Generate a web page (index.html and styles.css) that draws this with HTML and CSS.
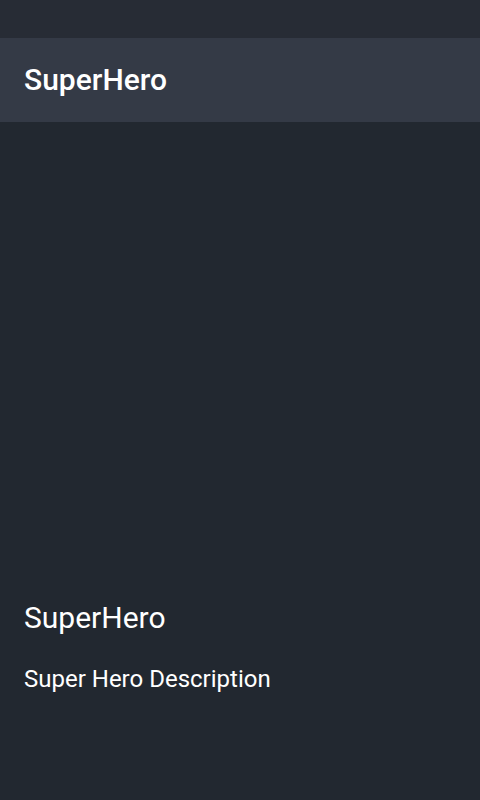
FILE: index.html
```html
<!DOCTYPE html>
<html>
<head>
<meta charset="utf-8">
<link rel="stylesheet" href="styles.css">
</head>
<body>
<div class="screen">
  <div class="status-bar"></div>
  <header class="app-bar"><h1 class="app-title">SuperHero</h1></header>
  <main class="content">
    <div class="image-area"></div>
    <div class="info">
      <h2 class="hero-name">SuperHero</h2>
      <p class="hero-desc">Super Hero Description</p>
    </div>
  </main>
</div>
</body>
</html>
```
FILE: styles.css
```css
html, body { margin: 0; padding: 0; }
body { background: #222830; font-family: Roboto, "Noto Sans", sans-serif; color: #fff; }
.screen { width: 480px; height: 800px; display: flex; flex-direction: column; background: #222830; }
.status-bar { height: 38px; background: #272c35; flex: none; }
.app-bar { height: 84px; background: #343a46; display: flex; align-items: center; padding: 0 24px; flex: none; }
.app-title { margin: 0; font-size: 30px; font-weight: 500; line-height: 1; }
.content { flex: 1; display: flex; flex-direction: column; }
.image-area { flex: 1; }
.info { padding: 0 24px 105px; }
.hero-name { margin: 0; font-size: 30px; font-weight: 400; line-height: 40px; }
.hero-desc { margin: 25px 0 0; font-size: 24px; line-height: 32px; }
```
